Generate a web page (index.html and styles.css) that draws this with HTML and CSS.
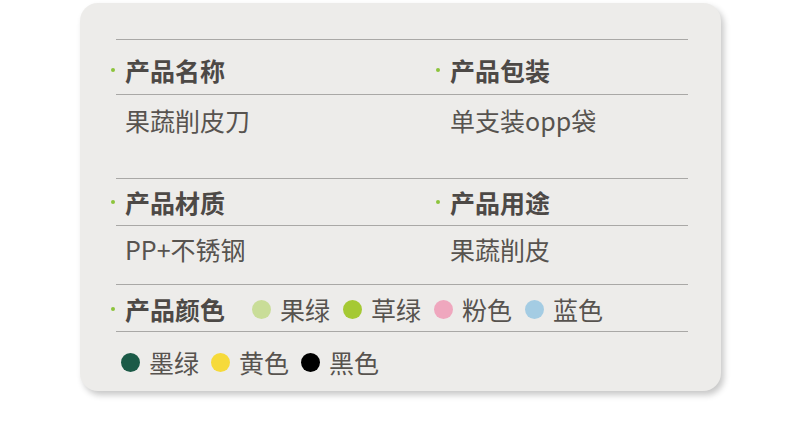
FILE: index.html
```html
<!DOCTYPE html>
<html lang="zh-CN">
<head>
<meta charset="utf-8">
<link rel="stylesheet" href="styles.css">
</head>
<body>
<div class="card">
  <section class="sec sec-1">
    <div class="grid labels">
      <div class="label">产品名称</div>
      <div class="label">产品包装</div>
    </div>
    <div class="grid values">
      <div class="value">果蔬削皮刀</div>
      <div class="value">单支装opp袋</div>
    </div>
  </section>
  <section class="sec sec-2">
    <div class="grid labels">
      <div class="label">产品材质</div>
      <div class="label">产品用途</div>
    </div>
    <div class="grid values">
      <div class="value">PP+不锈钢</div>
      <div class="value">果蔬削皮</div>
    </div>
  </section>
  <section class="sec sec-3">
    <div class="colors-row">
      <div class="label">产品颜色</div>
      <ul class="swatches">
        <li><i class="dot c-guolv"></i>果绿</li>
        <li><i class="dot c-caolv"></i>草绿</li>
        <li><i class="dot c-fen"></i>粉色</li>
        <li><i class="dot c-lan"></i>蓝色</li>
      </ul>
    </div>
    <ul class="swatches more">
      <li><i class="dot c-mo"></i>墨绿</li>
      <li><i class="dot c-huang"></i>黄色</li>
      <li><i class="dot c-hei"></i>黑色</li>
    </ul>
  </section>
</div>
</body>
</html>
```

FILE: styles.css
```css
* { box-sizing: border-box; }
html, body { margin: 0; padding: 0; background: #ffffff; }
body {
  width: 790px;
  height: 437px;
  overflow: hidden;
  font-family: "Noto Sans CJK SC", "Noto Sans", sans-serif;
  color: #555350;
}
.card {
  margin: 3px 0 0 80px;
  width: 641px;
  height: 388px;
  border-radius: 18px;
  background: #edecea;
  box-shadow: 3px 4px 6px rgba(0, 0, 0, 0.22);
  padding: 36px 33px 0 36px;
}
.sec { border-top: 1px solid #a9a8a6; }
.grid {
  display: grid;
  grid-template-columns: 325px 247px;
}
.labels { border-bottom: 1px solid #a9a8a6; }
.label {
  display: flex;
  align-items: center;
  margin-left: -5px;
  font-size: 25px;
  font-weight: 700;
  line-height: 30px;
  color: #4d4946;
  white-space: nowrap;
}
.labels .label { line-height: 26px; }
.label::before {
  content: "";
  width: 4px;
  height: 4px;
  border-radius: 50%;
  background: #8cc43c;
  margin-right: 10px;
  flex: none;
}
.value {
  padding-left: 9px;
  font-size: 25px;
  line-height: 30px;
  color: #57534f;
  white-space: nowrap;
}
.sec-1 .labels { height: 55px; padding-top: 6px; }
.sec-1 .values { height: 83px; padding-top: 10px; }
.sec-2 .labels { height: 47px; padding-top: 0; }
.sec-2 .values { height: 58px; padding-top: 8px; }
.colors-row {
  display: flex;
  align-items: flex-start;
  height: 47px;
  padding-top: 9px;
  border-bottom: 1px solid #a9a8a6;
}
.swatches {
  list-style: none;
  margin: 0;
  padding: 0;
  display: flex;
  gap: 13px;
  font-size: 25px;
  line-height: 30px;
  color: #57534f;
}
.colors-row .swatches { margin-left: 27px; }
.swatches li {
  display: flex;
  align-items: center;
  gap: 9px;
  white-space: nowrap;
}
.swatches.more { padding: 15px 0 0 5px; gap: 12px; }
.dot {
  display: block;
  width: 19px;
  height: 19px;
  border-radius: 50%;
  flex: none;
}
.c-guolv { background: #c9dd98; }
.c-caolv { background: #a5c934; }
.c-fen { background: #efa7be; }
.c-lan { background: #a4cce3; }
.c-mo { background: #1b5a47; }
.c-huang { background: #f6da3a; }
.c-hei { background: #000000; }
```
